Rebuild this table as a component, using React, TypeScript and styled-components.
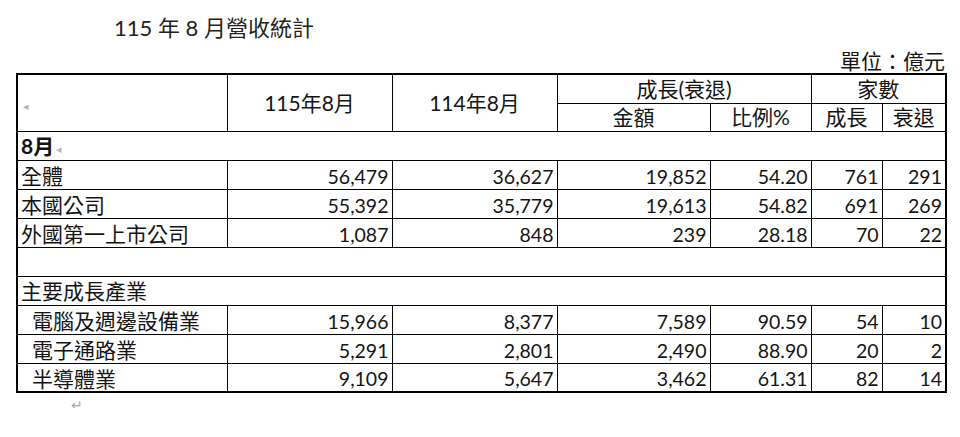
import React from "react";
import styled, { createGlobalStyle } from "styled-components";

const GlobalStyle = createGlobalStyle`
  html, body {
    margin: 0;
    padding: 0;
    background: #ffffff;
  }
  body {
    font-family: "Lato", "Noto Sans CJK TC", sans-serif;
    color: #141414;
  }
`;

const Page = styled.div`
  width: 960px;
  height: 437px;
  box-sizing: border-box;
  padding: 8px 0 0 16px;
  overflow: hidden;
`;

const Title = styled.h1`
  margin: 0;
  padding-left: 98px;
  height: 40px;
  line-height: 40px;
  font-size: 22px;
  font-weight: 400;
  color: #222;
  font-family: "Lato", "Noto Sans CJK TC", sans-serif;
`;

const Unit = styled.div`
  width: 929px;
  height: 25px;
  line-height: 25px;
  text-align: right;
  font-size: 21px;
  font-family: "Noto Sans CJK TC", sans-serif;
`;

const Table = styled.table`
  width: 929px;
  table-layout: fixed;
  border-collapse: collapse;
  border: 2px solid #000;
`;

const Row = styled.tr<{ $h?: number }>`
  height: ${(p) => p.$h ?? 29}px;
`;

const HeadCell = styled.th`
  border: 1px solid #000;
  padding: 0;
  font-weight: 400;
  font-size: 21px;
  line-height: 22px;
  text-align: center;
  vertical-align: middle;
  white-space: nowrap;
`;

const BlankHead = styled(HeadCell)`
  text-align: left;
  padding-left: 3px;
`;

const LabelCell = styled.td<{ $indent?: boolean }>`
  border: 1px solid #000;
  padding: 1px 0 0 ${(p) => (p.$indent ? 14 : 3)}px;
  font-size: 21px;
  line-height: 22px;
  text-align: left;
  vertical-align: middle;
  white-space: nowrap;
  font-family: "Noto Sans CJK TC", sans-serif;
`;

const NumCell = styled.td`
  border: 1px solid #000;
  padding: 4px 3px 0 0;
  font-size: 19.5px;
  line-height: 20px;
  text-align: right;
  vertical-align: middle;
  white-space: nowrap;
  font-family: "Lato", sans-serif;
`;

const SectionCell = styled.td<{ $bold?: boolean }>`
  border: 1px solid #000;
  padding: 1px 0 0 3px;
  font-size: 21px;
  line-height: 22px;
  font-weight: ${(p) => (p.$bold ? 700 : 400)};
  text-align: left;
  vertical-align: middle;
  white-space: nowrap;
`;

const Mark = styled.span`
  color: #b5b5b5;
  font-size: 11px;
  line-height: 11px;
  font-weight: 400;
  margin-left: 2px;
  vertical-align: middle;
`;

const Para = styled.div`
  padding-left: 55px;
  margin-top: 3px;
  color: #a8a8a8;
  font-size: 14px;
  line-height: 18px;
  font-family: "DejaVu Sans", sans-serif;
`;

type DataRow = {
  label: string;
  values: string[];
  indent?: boolean;
};

const mainRows: DataRow[] = [
  { label: "全體", values: ["56,479", "36,627", "19,852", "54.20", "761", "291"] },
  { label: "本國公司", values: ["55,392", "35,779", "19,613", "54.82", "691", "269"] },
  { label: "外國第一上市公司", values: ["1,087", "848", "239", "28.18", "70", "22"] },
];

const industryRows: DataRow[] = [
  { label: "電腦及週邊設備業", values: ["15,966", "8,377", "7,589", "90.59", "54", "10"], indent: true },
  { label: "電子通路業", values: ["5,291", "2,801", "2,490", "88.90", "20", "2"], indent: true },
  { label: "半導體業", values: ["9,109", "5,647", "3,462", "61.31", "82", "14"], indent: true },
];

const widths = [210, 165, 165, 153, 101, 71, 64];

function renderRow(r: DataRow) {
  return (
    <Row key={r.label}>
      <LabelCell $indent={r.indent}>{r.label}</LabelCell>
      {r.values.map((v, i) => (
        <NumCell key={i}>{v}</NumCell>
      ))}
    </Row>
  );
}

export default function App() {
  return (
    <>
      <GlobalStyle />
      <Page>
        <Title>115 年 8 月營收統計</Title>
        <Unit>單位：億元</Unit>
        <Table>
          <colgroup>
            {widths.map((w, i) => (
              <col key={i} style={{ width: w }} />
            ))}
          </colgroup>
          <thead>
            <Row $h={29}>
              <BlankHead rowSpan={2}>
                <Mark>◂</Mark>
              </BlankHead>
              <HeadCell rowSpan={2}>115年8月</HeadCell>
              <HeadCell rowSpan={2}>114年8月</HeadCell>
              <HeadCell colSpan={2}>成長(衰退)</HeadCell>
              <HeadCell colSpan={2}>家數</HeadCell>
            </Row>
            <Row $h={28}>
              <HeadCell>金額</HeadCell>
              <HeadCell>比例%</HeadCell>
              <HeadCell>成長</HeadCell>
              <HeadCell>衰退</HeadCell>
            </Row>
          </thead>
          <tbody>
            <Row>
              <SectionCell colSpan={7} $bold>
                8月<Mark>◂</Mark>
              </SectionCell>
            </Row>
            {mainRows.map(renderRow)}
            <Row>
              <SectionCell colSpan={7} />
            </Row>
            <Row>
              <SectionCell colSpan={7}>主要成長產業</SectionCell>
            </Row>
            {industryRows.map(renderRow)}
          </tbody>
        </Table>
        <Para>↵</Para>
      </Page>
    </>
  );
}
